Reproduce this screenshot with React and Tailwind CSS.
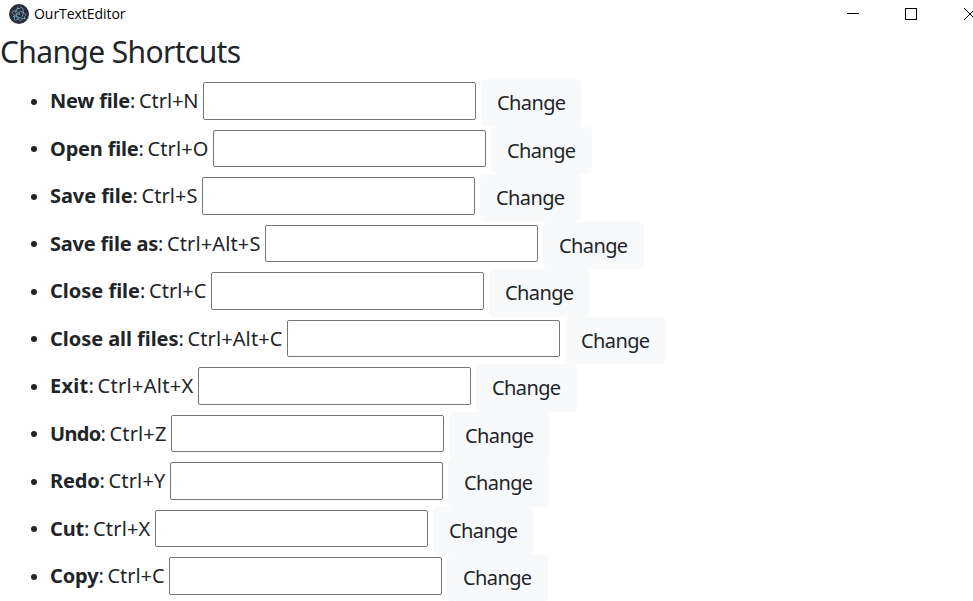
import { useLayoutEffect, useRef } from "react";

const shortcuts = [
  { name: "New file", keys: "Ctrl+N", nameWidth: 80, keysWidth: 59.5 },
  { name: "Open file", keys: "Ctrl+O", nameWidth: 88.5, keysWidth: 61 },
  { name: "Save file", keys: "Ctrl+S", nameWidth: 82.5, keysWidth: 56 },
  { name: "Save file as", keys: "Ctrl+Alt+S", nameWidth: 108, keysWidth: 93.5 },
  { name: "Close file", keys: "Ctrl+C", nameWidth: 90, keysWidth: 57.5 },
  { name: "Close all files", keys: "Ctrl+Alt+C", nameWidth: 128.5, keysWidth: 95 },
  { name: "Exit", keys: "Ctrl+Alt+X", nameWidth: 38.5, keysWidth: 96 },
  { name: "Undo", keys: "Ctrl+Z", nameWidth: 50.5, keysWidth: 57 },
  { name: "Redo", keys: "Ctrl+Y", nameWidth: 49.5, keysWidth: 57 },
  { name: "Cut", keys: "Ctrl+X", nameWidth: 34, keysWidth: 57.5 },
  { name: "Copy", keys: "Ctrl+C", nameWidth: 48.5, keysWidth: 57 },
];

// Tracks the text evenly so that it fills the given width.
function Fit({ width, className = "", children }) {
  const ref = useRef(null);
  useLayoutEffect(() => {
    const el = ref.current;
    el.style.letterSpacing = "0px";
    const natural = el.getBoundingClientRect().width;
    el.style.letterSpacing = `${(width - natural) / children.length}px`;
  }, [width, children]);
  return (
    <span className={`block shrink-0 whitespace-pre ${className}`} style={{ width }}>
      <span ref={ref}>{children}</span>
    </span>
  );
}

function AppLogo() {
  return (
    <svg width="20" height="20" viewBox="0 0 20 20" fill="none">
      <circle cx="10" cy="10" r="10" fill="#2b2e3a" />
      <g stroke="#9feaf9" strokeWidth="0.7" strokeLinecap="round" opacity="0.8">
        <path d="M8.2 7.2C5.6 6.7 3.6 7.1 3.2 8c-.4.9.6 2.300 2.400 3.500" />
        <path d="M7 12.300c2.500 1.400 5.300 2.200 7.300 2.100M12.400 7.500c2.500.9 4.300 2.300 4.400 3.500.1.600-.4 1-1.100 1.300" />
        <path d="M11.600 7.200C9 8.700 6.600 11 5.700 12.900c-.8 1.500-.7 2.700.1 3.100.8.4 2-.1 3.400-1.200" />
        <path d="M13.300 12.400c.9-2.700 1.100-5.400.6-7.200-.4-1.300-1.100-1.900-1.900-1.700-.6.1-1.200.6-1.700 1.400" />
        <path d="M8.200 4.400C7 4.800 6.700 6.900 7.100 9.300c.5 3.500 2 6.600 3.700 7.300.8.300 1.500-.1 2.100-1" />
      </g>
      <g fill="#9feaf9">
        <circle cx="10.200" cy="10" r="0.8" />
        <circle cx="4.800" cy="12.600" r="0.7" />
        <circle cx="15.700" cy="14.200" r="0.8" />
        <circle cx="9" cy="4.200" r="0.8" />
      </g>
    </svg>
  );
}

export default function App() {
  return (
    <div className="h-[601px] w-[973px] overflow-hidden bg-white font-['Noto_Sans',sans-serif] text-[#212529]">
      <header className="flex h-7 items-center pl-[9px] text-black">
        <AppLogo />
        <div className="ml-[5px] font-['Open_Sans',sans-serif] text-[14px] leading-5">
          <Fit width={91.5}>OurTextEditor</Fit>
        </div>
        <svg className="ml-auto" width="127" height="28" viewBox="0 0 127 28" fill="none" stroke="#000" shapeRendering="crispEdges">
          <path d="M1 13.5H13" />
          <rect x="59.5" y="8.5" width="11" height="11" />
          <path d="M118 8L130 20M118 20L130 8" shapeRendering="auto" />
        </svg>
      </header>
      <h1 className="h-[51.25px] pt-1 text-[30px] leading-[40px]">
        <Fit width={240.5}>Change Shortcuts</Fit>
      </h1>
      <ul className="text-[20px] leading-[30px]">
        {shortcuts.map((s) => (
          <li key={s.name} className="flex h-[47.5px] items-start">
            <span className="mt-[19.25px] mr-[13px] ml-[31px] size-[6px] shrink-0 rounded-full bg-[#212529]" />
            <div className="flex pt-[6.75px]">
              <Fit width={s.nameWidth} className="font-bold">{s.name}</Fit>
              <Fit width={9}>{": "}</Fit>
              <Fit width={s.keysWidth}>{s.keys}</Fit>
            </div>
            <input className="mt-[2.75px] ml-[4.5px] h-[37.5px] w-[273px] shrink-0 rounded-[2px] border border-[#767676] bg-white px-1 outline-none" />
            <button className="ml-[5px] h-[47.5px] w-[101px] shrink-0 rounded-[5px] bg-[#f8f9fa] pl-[16px] text-left">
              <Fit width={68.5}>Change</Fit>
            </button>
          </li>
        ))}
      </ul>
    </div>
  );
}
